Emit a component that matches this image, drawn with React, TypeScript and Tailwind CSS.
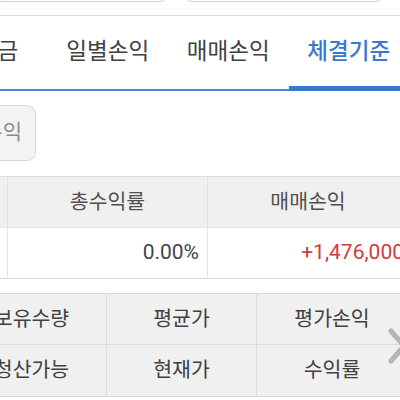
import React from "react";

const font = { fontFamily: "Roboto, 'Noto Sans CJK KR', sans-serif" };

export default function App() {
  const tabs = ["예수금", "일별손익", "매매손익", "체결기준"];
  return (
    <div className="relative w-[400px] h-[400px] overflow-hidden bg-white" style={font}>
      {/* top inputs cut off */}
      <div className="h-[16px] border-b border-[#dddddd] overflow-hidden flex">
        <div className="w-[171px] h-[30px] -mt-[28px] border border-[#cfcfcf] rounded-[6px] -ml-[4px]" />
        <div className="w-[197px] h-[30px] -mt-[28px] border border-[#cfcfcf] rounded-[6px] ml-[18px]" />
      </div>
      {/* tabs */}
      <div className="relative h-[75px] border-b-[2px] border-[#4a86d6] flex -ml-[73px]">
        {tabs.map((t, i) => (
          <div
            key={t}
            className={
              "w-[120.5px] shrink-0 flex items-center justify-center text-[22.5px] pb-[2px] " +
              (i === 3 ? "text-[#3a78d0] font-medium border-b-[5px] border-[#3a78d0] -mb-[2px] pt-[3px]" : "text-[#404040]")
            }
          >
            {t}
          </div>
        ))}
      </div>
      {/* button */}
      <div className="h-[85px] pt-[14px]">
        <div className="h-[56px] w-[80px] -ml-[44px] rounded-[9px] border border-[#d9d9d9] bg-[#f3f3f3] flex items-center justify-end pr-[13px] text-[21px] text-[#8a8a8a]">
          손익
        </div>
      </div>
      {/* table 1 */}
      <div className="border-y border-[#dcdcdc] -ml-[192px] w-[700px]">
        <div className="flex h-[51px] bg-[#f0f0f0] border-b border-[#e6e6e6] text-[20.5px] text-[#505050]">
          <div className="w-[200px] shrink-0 border-r border-[#e2e2e2]" />
          <div className="w-[200px] shrink-0 border-r border-[#e2e2e2] flex items-center justify-center">총수익률</div>
          <div className="w-[200px] shrink-0 flex items-center justify-center">매매손익</div>
        </div>
        <div className="flex h-[50px] bg-white text-[21px]">
          <div className="w-[200px] shrink-0 border-r border-[#e6e6e6]" />
          <div className="w-[200px] shrink-0 border-r border-[#e6e6e6] flex items-center justify-end pr-[8px] text-[#444444]">0.00%</div>
          <div className="w-[200px] shrink-0 flex items-center justify-end pr-[4px] text-[#d23a3a]">+1,476,000</div>
        </div>
      </div>
      {/* table 2 */}
      <div className="mt-[14px] -ml-[43px] w-[500px] border-y border-[#d8d8d8] bg-[#f0f0f0] text-[20.5px] text-[#404040]">
        {[
          ["보유수량", "평균가", "평가손익"],
          ["청산가능", "현재가", "수익률"],
        ].map((row, r) => (
          <div key={r} className={"flex h-[51px] " + (r === 0 ? "border-b border-[#dddddd]" : "")}>
            {row.map((c, j) => (
              <div
                key={c}
                className={"w-[150px] shrink-0 flex items-center justify-center " + (j < 2 ? "border-r border-[#dddddd]" : "")}
              >
                {c}
              </div>
            ))}
          </div>
        ))}
      </div>
      {/* chevron */}
      <svg className="absolute left-[387px] top-[328px]" width="20" height="36" viewBox="0 0 20 36">
        <path d="M4 3 L17 18 L4 33" fill="none" stroke="#b5b5b5" strokeWidth="5" strokeLinecap="round" strokeLinejoin="round" />
      </svg>
    </div>
  );
}
